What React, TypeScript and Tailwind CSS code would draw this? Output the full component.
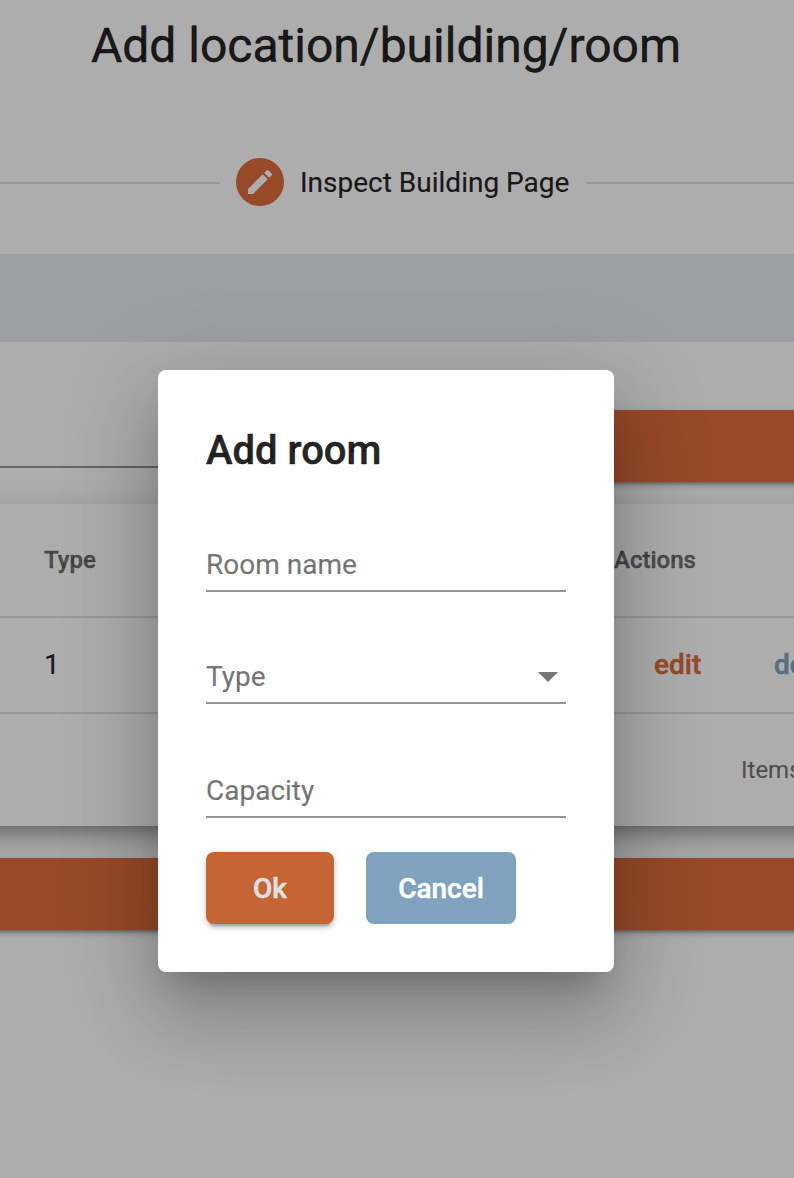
import React from 'react';

const raised =
  'shadow-[0_6px_2px_-4px_rgba(0,0,0,0.2),0_4px_4px_0_rgba(0,0,0,0.14),0_2px_10px_0_rgba(0,0,0,0.12)]';

const strong = 'font-medium [-webkit-text-stroke:0.5px]';

function Stepper() {
  return (
    <div className="flex h-[144px] items-center">
      <div className="mt-[2px] h-[2px] w-[220px] bg-black/12" />
      <div className="ml-4 flex size-12 items-center justify-center rounded-full bg-[#e16e3b]">
        <svg viewBox="0 0 24 24" className="size-8 fill-white">
          <path d="M3 17.25V21h3.75L17.81 9.94l-3.75-3.75L3 17.25zM20.71 7.04a.996.996 0 0 0 0-1.41l-2.34-2.34a.996.996 0 0 0-1.41 0l-1.83 1.83 3.75 3.75 1.83-1.83z" />
        </svg>
      </div>
      <span className="mt-[2px] ml-4 w-[270px] whitespace-nowrap text-[28px] leading-8 text-black/87">
        Inspect Building Page
      </span>
      <div className="mt-[2px] ml-4 h-[2px] flex-1 bg-black/12" />
    </div>
  );
}

function RoomTable() {
  return (
    <div className="-mx-10 mt-[22px] h-[322px] bg-white px-10 shadow-[0_10px_10px_-6px_rgba(0,0,0,0.2),0_16px_20px_2px_rgba(0,0,0,0.14),0_6px_28px_4px_rgba(0,0,0,0.12)]">
      <div className="flex h-[114px] items-center border-b-2 border-black/12 text-[24px] text-black/54">
        <span className={`w-[570px] pl-11 ${strong}`}>Type</span>
        <span className={`pl-11 ${strong}`}>Actions</span>
      </div>
      <div className="flex h-24 items-center border-b-2 border-black/12 text-[28px] text-black/87">
        <span className="w-[654px] shrink-0 pl-11">1</span>
        <span className={`w-[120px] shrink-0 text-[#e16e3b] ${strong}`}>edit</span>
        <span className={`text-[#7fa3be] ${strong}`}>delete</span>
      </div>
      <div className="flex h-28 items-center pl-[741px] text-[24px] whitespace-nowrap text-black/54">
        Items per page:
      </div>
    </div>
  );
}

function Field({ label, className, select }: { label: string; className: string; select?: boolean }) {
  return (
    <div className={`flex items-center justify-between border-b-2 border-black/42 pt-[2px] text-[28px] leading-8 text-black/54 ${className}`}>
      <span>{label}</span>
      {select && (
        <svg viewBox="0 0 20 10" className="mr-2 h-[10px] w-5 fill-black/54">
          <path d="M0 0h20L10 10z" />
        </svg>
      )}
    </div>
  );
}

function AddRoomDialog() {
  return (
    <div className="h-[602px] w-[456px] rounded-lg bg-white px-12 pt-12 shadow-[0_22px_30px_-14px_rgba(0,0,0,0.2),0_48px_76px_6px_rgba(0,0,0,0.14),0_18px_92px_16px_rgba(0,0,0,0.12)]">
      <h2 className={`h-16 pt-px text-[40px] leading-[64px] text-black/87 ${strong}`}>Add room</h2>
      <Field label="Room name" className="mt-14 h-[54px]" />
      <Field label="Type" select className="mt-[58px] h-[54px]" />
      <Field label="Capacity" className="mt-[60px] h-[54px]" />
      <div className="mt-[34px] flex gap-8 text-[28px]">
        <button className={`h-[72px] w-32 rounded-lg bg-[#c66534] pt-[2px] text-[#e0e0e0] ${strong} ${raised}`}>Ok</button>
        <button className={`h-[72px] w-[150px] rounded-lg bg-[#7fa3be] pt-[2px] text-white ${strong}`}>Cancel</button>
      </div>
    </div>
  );
}

export default function App() {
  return (
    <div className="relative h-[1178px] w-[794px] overflow-hidden bg-white font-['Roboto',sans-serif] [-webkit-text-stroke:0.2px]">
      <main>
        <h1 className="h-[110px] w-[772px] pt-[14px] text-center text-[48px] leading-[64px] text-black/87 [-webkit-text-stroke:0.5px]">
          Add location/building/room
        </h1>
        <Stepper />
        <div className="h-[88px] bg-[#e9ebed]" />
        <div className="-mr-10 flex h-[140px] items-start pt-[68px]">
          <div className="h-[58px] w-[570px] border-b-2 border-black/42" />
          <div className={`h-[72px] flex-1 bg-[#e16e3b] ${raised}`} />
        </div>
        <RoomTable />
        <div className={`-mx-10 mt-8 h-[72px] bg-[#e16e3b] ${raised}`} />
      </main>
      <div className="absolute inset-0 bg-black/32 pt-[370px] pl-[158px]">
        <AddRoomDialog />
      </div>
    </div>
  );
}
